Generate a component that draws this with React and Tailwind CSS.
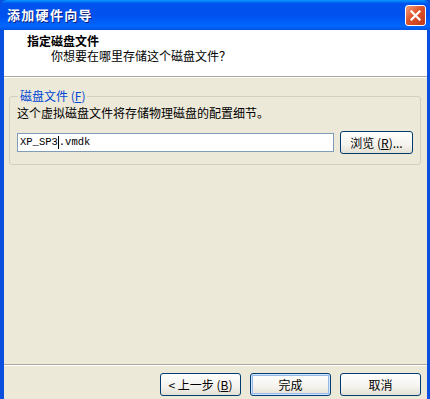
import React from 'react';

const font = { fontFamily: '"Noto Sans CJK SC", "Liberation Sans", sans-serif' };

const XpButton = ({ children, primary, className = '' }) => (
  <button
    className={`h-[23px] rounded-[3px] border border-[#003C74] bg-[linear-gradient(to_bottom,#FFFFFF_0%,#F4F3EE_60%,#E3E0D3_100%)] text-[12px] leading-none text-black flex items-center justify-center ${
      primary ? 'shadow-[inset_0_0_0_1px_#CEE7FF,inset_0_0_0_2px_#98B8EA]' : ''
    } ${className}`}
  >
    {children}
  </button>
);

export default function App() {
  return (
    <div className="w-[430px] h-[399px] overflow-hidden flex flex-col bg-[#0A4FDD] text-black" style={font}>
      {/* Title bar */}
      <div className="h-[30px] shrink-0 flex items-center justify-between pl-[7px] pr-[4px] bg-[linear-gradient(to_bottom,#0997FF_0%,#0053EE_12%,#0050EE_50%,#0066FF_88%,#0053E0_100%)] rounded-t-[7px]">
        <span className="text-white font-bold text-[13px] tracking-[1.3px] [text-shadow:1px_1px_0_#0A1E7D]">添加硬件向导</span>
        <div className="w-[21px] h-[21px] rounded-[3px] border border-white bg-[linear-gradient(135deg,#F0A080_0%,#E0542B_45%,#C0391A_100%)] flex items-center justify-center">
          <svg width="11" height="11" viewBox="0 0 11 11">
            <path d="M1.5 1.5 L9.5 9.5 M9.5 1.5 L1.5 9.5" stroke="white" strokeWidth="2.2" strokeLinecap="square" />
          </svg>
        </div>
      </div>

      {/* Window body */}
      <div className="flex-1 flex flex-col ml-[4px] mr-[3px] bg-[#ECE9D8]">
        {/* Header */}
        <div className="h-[46px] shrink-0 bg-white pl-[23px] pt-[3px] text-[12px] leading-[15px]">
          <div className="font-bold">指定磁盘文件</div>
          <div className="pl-[24px]">你想要在哪里存储这个磁盘文件？</div>
        </div>
        <div className="h-px bg-[#ACA899]" />
        <div className="h-px bg-white" />

        {/* Content */}
        <div className="flex-1 px-[5px] pt-[11px]">
          <fieldset className="border border-[#D0D0BF] rounded-[3px] px-[7px] pb-[10px] pt-0 w-[412px]">
            <legend className="px-[2px] ml-[1px] text-[12px] text-[#0046D5] leading-[14px]">
              磁盘文件 (<span className="underline">F</span>)
            </legend>
            <div className="text-[12px] leading-[15px] mt-[2px]">这个虚拟磁盘文件将存储物理磁盘的配置细节。</div>
            <div className="flex items-center gap-[6px] mt-[11px]">
              <div
                className="w-[317px] h-[19px] border border-[#7F9DB9] bg-white flex items-center pl-[2px] text-[10.5px]"
                style={{ fontFamily: '"Liberation Mono", monospace' }}
              >
                <span>XP_SP3</span>
                <span className="w-px h-[13px] bg-black" />
                <span>.vmdk</span>
              </div>
              <XpButton className="w-[73px] h-[21px]">
                浏览 (<span className="underline">R</span>)...
              </XpButton>
            </div>
          </fieldset>
        </div>

        {/* Footer */}
        <div className="h-px bg-[#ACA899]" />
        <div className="h-px bg-white" />
        <div className="h-[33px] shrink-0 flex justify-end items-start gap-[9px] pt-[7px] pr-[6px]">
          <XpButton className="w-[81px]">
            &lt; 上一步 (<span className="underline">B</span>)
          </XpButton>
          <XpButton primary className="w-[81px]">完成</XpButton>
          <XpButton className="w-[81px]">取消</XpButton>
        </div>
      </div>
    </div>
  );
}
